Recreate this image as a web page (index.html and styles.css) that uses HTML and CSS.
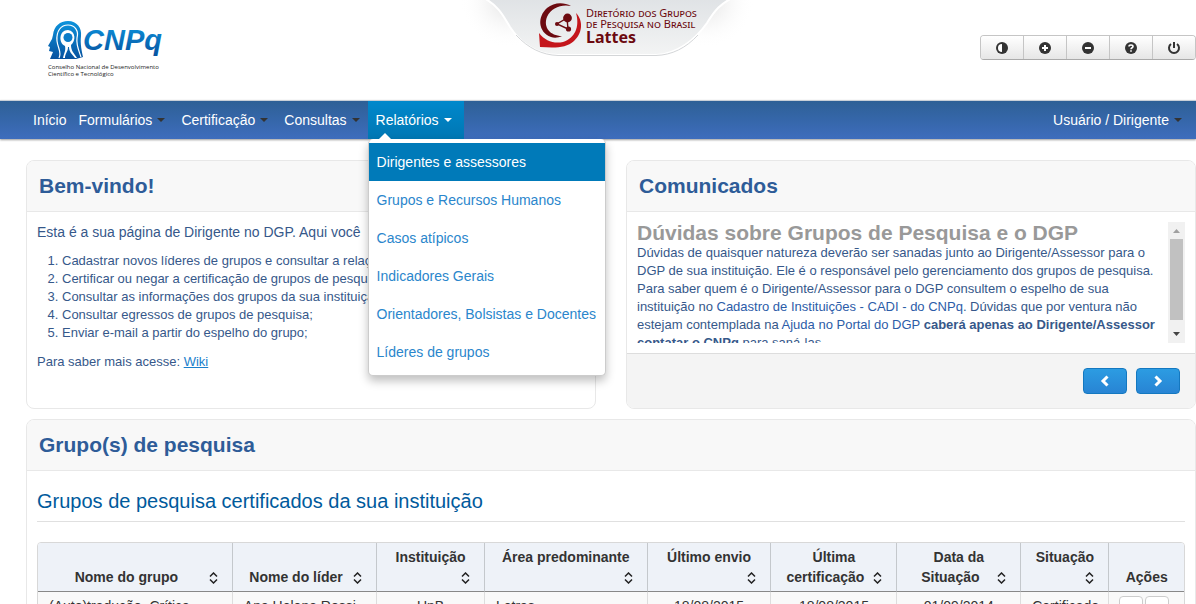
FILE: index.html
```html
<!DOCTYPE html>
<html lang="pt-BR">
<head>
<meta charset="utf-8">
<title>Diretório dos Grupos de Pesquisa no Brasil - Lattes</title>
<link rel="stylesheet" href="styles.css">
</head>
<body>
<header class="top">
  <a class="brand" href="#">
    <svg class="brand-mark" width="116" height="42" viewBox="0 0 116 42">
      <defs>
        <linearGradient id="blue" x1="0" y1="0" x2="0" y2="1"><stop offset="0" stop-color="#0c93dc"/><stop offset="1" stop-color="#07529f"/></linearGradient>
      </defs>
      <path fill="url(#blue)" d="M5 15C6 6 12 1 20 1C29 1 34 8 33 16C32 24 34 32 35 37L28 39H2L5 32L1 31L2 27L0 26L4 19Z"/>
      <path fill="none" stroke="#fff" stroke-width="1.2" d="M11 38C14 32 10 29 9 21C8 11 13 5 20 5C27 5 31 11 29 18C28 25 31 31 33 37"/>
      <path fill="#fff" d="M15 38C16 33 18 31 17 26C10 23 11 10 20 10C28 11 28 21 23 25C23 31 26 33 29 38H27C24 34 21 32 21 27H20C20 32 17 33 17 38Z"/>
      <circle cx="20" cy="17.500" r="4.500" fill="#0b7cc8"/>
      <text class="brand-name" x="35" y="30" fill="url(#blue)">CNPq</text>
    </svg>
    <span class="brand-sub">Conselho Nacional de Desenvolvimento<br>Científico e Tecnológico</span>
  </a>
  <svg class="tab" width="300" height="64" viewBox="0 0 300 64">
    <defs>
      <linearGradient id="tabfill" x1="0" y1="0" x2="0" y2="1"><stop offset="0" stop-color="#dfe2e5"/><stop offset="1" stop-color="#f3f4f4"/></linearGradient>
      <radialGradient id="glow"><stop offset="0" stop-color="#e2e2e2"/><stop offset="1" stop-color="#fff" stop-opacity="0"/></radialGradient>
    </defs>
    <ellipse cx="48" cy="2" rx="48" ry="46" fill="url(#glow)"/>
    <ellipse cx="246" cy="2" rx="48" ry="46" fill="url(#glow)"/>
    <path fill="url(#tabfill)" stroke="#fff" stroke-width="2" d="M22 -3C38 5 43 15 50 27C60 43 78 55 98 55H196C217 54 235 40 247 23C255 10 260 4 274 -3Z"/>
    <path fill="none" stroke="#d4d6d8" d="M56 35C68 48 82 55 98 55.500H196C212 55 226 48 238 35"/>
    <path fill="#6c0a10" d="M111 6C104 2 94 2 87 8C77 17 78 32 91 37C94 38 98 38 102 36C90 36 83 27 87 17C91 8 101 4 111 6Z"/>
    <path fill="#c4161c" d="M116 13C124 21 122 34 114 41C106 48 96 48 80 47L79 33C85 41 94 44 103 42C115 38 120 27 116 13Z"/>
    <path fill="none" stroke="#6c0a10" stroke-width="1.400" d="M107 18L97 24L108 29Z"/>
    <circle cx="107.500" cy="18" r="4.400" fill="#6c0a10"/><circle cx="97" cy="24" r="2" fill="#6c0a10"/><circle cx="108.500" cy="29" r="2.600" fill="#6c0a10"/>
    <text class="tab-text" x="126" y="17">Diretório dos Grupos</text>
    <text class="tab-text" x="126" y="28">de Pesquisa no Brasil</text>
    <text class="tab-name" x="126" y="43">Lattes</text>
  </svg>
  <div class="tools">
    <button aria-label="Contraste"><svg width="14" height="14" viewBox="0 0 14 14"><circle cx="7" cy="7" r="6" fill="#333"/><path fill="#fff" d="M7 3A4 4 0 0 0 7 11Z"/></svg></button>
    <button aria-label="Aumentar"><svg width="14" height="14" viewBox="0 0 14 14"><circle cx="7" cy="7" r="6" fill="#333"/><path stroke="#fff" stroke-width="2" d="M7 4V10M4 7H10"/></svg></button>
    <button aria-label="Diminuir"><svg width="14" height="14" viewBox="0 0 14 14"><circle cx="7" cy="7" r="6" fill="#333"/><path stroke="#fff" stroke-width="2" d="M4 7H10"/></svg></button>
    <button aria-label="Ajuda"><svg width="14" height="14" viewBox="0 0 14 14"><circle cx="7" cy="7" r="6" fill="#333"/><path fill="none" stroke="#fff" stroke-width="1.600" d="M5 5.500C5 3.500 9 3.500 9 5.500C9 6.800 7 6.700 7 8.200M7 9.200V10.800"/></svg></button>
    <button aria-label="Sair"><svg width="14" height="14" viewBox="0 0 14 14"><path fill="none" stroke="#333" stroke-width="2" d="M4 3A5 5 0 1 0 10 3M7 1V7"/></svg></button>
  </div>
</header>

<nav class="nav">
  <ul class="nav-list">
    <li class="nav-home"><a href="#">Início</a></li>
    <li><a href="#">Formulários<i class="caret"></i></a></li>
    <li><a href="#">Certificação<i class="caret"></i></a></li>
    <li><a href="#">Consultas<i class="caret"></i></a></li>
    <li class="open"><a href="#">Relatórios<i class="caret"></i></a>
      <ul class="menu">
        <li><a class="current" href="#">Dirigentes e assessores</a></li>
        <li><a href="#">Grupos e Recursos Humanos</a></li>
        <li><a href="#">Casos atípicos</a></li>
        <li><a href="#">Indicadores Gerais</a></li>
        <li><a href="#">Orientadores, Bolsistas e Docentes</a></li>
        <li><a href="#">Líderes de grupos</a></li>
      </ul>
    </li>
  </ul>
  <ul class="nav-list"><li><a href="#">Usuário / Dirigente<i class="caret"></i></a></li></ul>
</nav>

<main class="page">
  <div class="columns">
    <section class="card">
      <h2 class="card-title">Bem-vindo!</h2>
      <div class="welcome">
        <p class="lead">Esta é a sua página de Dirigente no DGP. Aqui você</p>
        <ol>
          <li>Cadastrar novos líderes de grupos e consultar a relação</li>
          <li>Certificar ou negar a certificação de grupos de pesquisa</li>
          <li>Consultar as informações dos grupos da sua instituição</li>
          <li>Consultar egressos de grupos de pesquisa;</li>
          <li>Enviar e-mail a partir do espelho do grupo;</li>
        </ol>
        <p>Para saber mais acesse: <a class="wiki" href="#">Wiki</a></p>
      </div>
    </section>
    <section class="card">
      <h2 class="card-title">Comunicados</h2>
      <div class="news">
        <div class="news-text">
          <h3>Dúvidas sobre Grupos de Pesquisa e o DGP</h3>
          <p>Dúvidas de quaisquer natureza deverão ser sanadas junto ao Dirigente/Assessor para o DGP de sua instituição. Ele é o responsável pelo gerenciamento dos grupos de pesquisa. Para saber quem é o Dirigente/Assessor para o DGP consultem o espelho de sua instituição no <a href="#">Cadastro de Instituições - CADI - do CNPq</a>. Dúvidas que por ventura não estejam contemplada na <a href="#">Ajuda no Portal do DGP</a> <b>caberá apenas ao Dirigente/Assessor contatar o CNPq</b> para saná-las.</p>
        </div>
        <div class="scroll">
          <svg width="17" height="17" viewBox="0 0 17 17"><path fill="#a0a0a0" d="M5 11L8.500 7L12 11Z"/></svg>
          <div class="thumb"></div>
          <svg width="17" height="17" viewBox="0 0 17 17"><path fill="#444" d="M5 6L8.500 10L12 6Z"/></svg>
        </div>
      </div>
      <div class="news-foot">
        <button class="step" aria-label="Anterior"><svg width="14" height="14" viewBox="0 0 14 14"><path fill="none" stroke="#fff" stroke-width="3" d="M9.500 2.500L5 7L9.500 11.500"/></svg></button>
        <button class="step" aria-label="Próximo"><svg width="14" height="14" viewBox="0 0 14 14"><path fill="none" stroke="#fff" stroke-width="3" d="M4.500 2.500L9 7L4.500 11.500"/></svg></button>
      </div>
    </section>
  </div>

  <section class="card">
    <h2 class="card-title">Grupo(s) de pesquisa</h2>
    <div class="groups">
      <h3 class="groups-title">Grupos de pesquisa certificados da sua instituição</h3>
      <svg width="0" height="0" class="sprite"><symbol id="sort" viewBox="0 0 9 12"><path fill="none" stroke="#222" stroke-width="1.500" d="M1 4.500L4.500 1L8 4.500M1 7.500L4.500 11L8 7.500"/></symbol></svg>
      <table class="grid">
        <colgroup><col class="w-name"><col class="w-lead"><col class="w-inst"><col class="w-area"><col class="w-sent"><col class="w-cert"><col class="w-date"><col class="w-sit"><col class="w-act"></colgroup>
        <thead><tr>
          <th>Nome do grupo<svg class="sort"><use href="#sort"/></svg></th>
          <th>Nome do líder<svg class="sort"><use href="#sort"/></svg></th>
          <th>Instituição<svg class="sort"><use href="#sort"/></svg></th>
          <th>Área predominante<svg class="sort"><use href="#sort"/></svg></th>
          <th>Último envio<svg class="sort"><use href="#sort"/></svg></th>
          <th>Última certificação<svg class="sort"><use href="#sort"/></svg></th>
          <th>Data da Situação<svg class="sort"><use href="#sort"/></svg></th>
          <th>Situação<svg class="sort"><use href="#sort"/></svg></th>
          <th>Ações</th>
        </tr></thead>
        <tbody><tr>
          <td>(Auto)tradução. Crítica</td><td>Ana Helena Rossi</td><td class="mid">UnB</td><td>Letras</td><td class="mid">18/08/2015</td><td class="mid">18/08/2015</td><td class="mid">01/09/2014</td><td class="mid">Certificado</td>
          <td class="actions"><button class="mini" aria-label="Espelho"></button><button class="mini" aria-label="Certificar"></button></td>
        </tr></tbody>
      </table>
    </div>
  </section>
</main>
</body>
</html>
```
FILE: styles.css
```css
* { box-sizing: border-box; }
html, body { margin: 0; }
body { height: 100vh; overflow: hidden; background: #fff; color: #36588a; font: 13px/18px "Liberation Sans", Arial, sans-serif; }
ul { list-style: none; margin: 0; padding: 0; }
a { color: inherit; text-decoration: none; }
button { font: inherit; padding: 0; cursor: pointer; }
h2, h3, p { margin: 0; }

.top { display: grid; grid-template-columns: 1fr auto 1fr; align-items: start; height: 100px; padding-left: 24px; }
.brand { padding: 20px 0 0 24px; color: #222; }
.brand-mark { display: block; }
.brand-name { font: italic bold 29px "Liberation Sans", Arial, sans-serif; }
.brand-sub { display: block; margin-top: 2px; font: 6px/7px "Open Sans", sans-serif; white-space: nowrap; }
.tab { display: block; }
.tab-text { font: 11px "Noto Sans", sans-serif; font-variant: small-caps; fill: #6c0a10; }
.tab-name { font: bold 16px "Noto Sans", sans-serif; fill: #6c0a10; }
.tools { display: flex; justify-self: end; margin-top: 35px; border: 1px solid #c5c5c5; border-bottom-color: #aaa; border-radius: 4px; overflow: hidden; }
.tools button { display: flex; align-items: center; justify-content: center; width: 43px; height: 23px; border: 0; border-left: 1px solid #c5c5c5; background: linear-gradient(#fff, #e6e6e6); }
.tools button:first-child { width: 42px; border-left: 0; }

.nav { display: flex; justify-content: space-between; padding: 0 6px 0 26px; border-top: 1px solid #c8d0d8; background: linear-gradient(#2d6096, #3e6dbd); box-shadow: 0 1px 2px rgba(0, 0, 0, .4); color: #fff; font-size: 14px; line-height: 38px; }
.nav-list { display: flex; }
.nav-list > li { position: relative; }
.nav-list > li > a { display: flex; align-items: center; gap: 5px; padding: 0 8px; }
.nav-list > .nav-home > a { padding: 0 4px 0 7px; }
.caret { border: 4px solid transparent; border-top-color: #333; border-bottom: 0; }
.open > a { background: linear-gradient(#0088cc, #0077b3); }
.open .caret { border-top-color: #fff; }
.nav-list > .open > a { padding-right: 12px; }
.menu { position: absolute; z-index: 2; top: 100%; left: 0; min-width: 238px; padding: 4px 0; border: 1px solid #ccc; border-top: 0; border-radius: 5px; background: #fff; box-shadow: 0 5px 10px rgba(0, 0, 0, .25); white-space: nowrap; color: #2a86cc; }
.menu::before { content: ""; position: absolute; top: -6px; left: 10px; border: 6px solid transparent; border-bottom-color: #fff; border-top: 0; }
.menu a { display: block; padding: 0 4px 0 8px; }
.menu .current { background: #007ab9; color: #fff; }

.page { display: grid; gap: 10px; padding: 21px 0 0 26px; }
.columns { display: grid; grid-template-columns: 1fr 1fr; gap: 30px; }
.card { display: flex; flex-direction: column; min-width: 0; border: 1px solid #e8e8e8; border-radius: 8px; overflow: hidden; background: #fff; }
.card-title { padding: 0 12px; border-bottom: 1px solid #e8e8e8; background: #f8f8f8; color: #2e5c98; font-size: 21px; line-height: 50px; }
.welcome { padding: 11px 10px 37px; }
.lead { font-size: 14px; }
.welcome ol { margin: 11px 0; padding-left: 25px; }
.wiki { color: #1b7fcc; text-decoration: underline; }
.news { display: flex; gap: 8px; padding: 10px; }
.news-text { flex: 1; height: 121px; overflow: hidden; }
.news-text h3 { color: #999; font-size: 21px; line-height: 22px; }
.news-text a { color: #2c5ca8; }
.scroll { display: flex; flex-direction: column; width: 17px; height: 121px; background: #f1f1f1; }
.thumb { width: 13px; height: 81px; margin: 0 auto auto; background: #c1c1c1; }
.news-foot { display: flex; flex: 1; justify-content: flex-end; align-items: flex-start; gap: 9px; padding: 14px 15px; border-top: 1px solid #ddd; background: #f4f4f4; }
.step { display: flex; align-items: center; justify-content: center; width: 44px; height: 26px; border: 1px solid #1478c0; border-radius: 4px; background: linear-gradient(#2c9ce2, #2884d4); }

.groups { padding: 20px 10px; }
.groups-title { padding-bottom: 10px; border-bottom: 1px solid #e0e0e0; color: #005a9c; font-size: 20px; font-weight: normal; line-height: 20px; }
.sprite { display: block; }
.grid { width: 100%; margin-top: 20px; table-layout: fixed; border-collapse: separate; border-spacing: 0; border: 1px solid #d8d8d8; border-radius: 4px; overflow: hidden; color: #333; font-size: 14px; line-height: 20px; }
.grid th { padding: 4px 14px; border-right: 1px solid #c4c8cc; border-bottom: 1px solid #888; background: #eef2f8; vertical-align: bottom; }
.grid td { padding: 4px 11px; border-right: 1px solid #ddd; background: #f9f9f9; white-space: nowrap; overflow: hidden; vertical-align: top; }
.grid th:last-child, .grid td:last-child { border-right: 0; }
.grid .mid { text-align: center; }
.sort { float: right; width: 9px; height: 12px; margin: 5px 0 3px 8px; }
.grid .actions { padding: 4px 10px; }
.mini { width: 24px; height: 24px; margin-right: 2px; border: 1px solid #ccc; border-radius: 4px; background: #fff; }
.w-name { width: 17%; }
.w-lead { width: 12.6%; }
.w-inst { width: 9.4%; }
.w-area { width: 14.2%; }
.w-sent { width: 10.8%; }
.w-cert { width: 11%; }
.w-date { width: 10.8%; }
.w-sit { width: 7.7%; }
.w-act { width: 6.5%; }
```
